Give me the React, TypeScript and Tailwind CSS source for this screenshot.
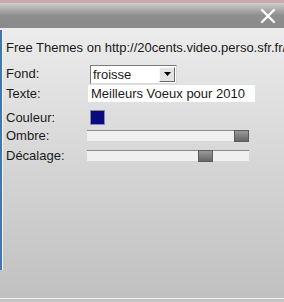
export default function App() {
  const font = { fontFamily: '"Liberation Sans", Arial, sans-serif' }
  return (
    <div className="flex h-[302px] w-[284px] flex-col overflow-hidden bg-[#c2c2c2] text-[13px] text-[#1a1a1a]" style={font}>
      <div className="h-[3px] bg-[#c8abb1]" />
      <div className="flex h-[25px] items-center justify-end bg-gradient-to-b from-[#cdcdcd] via-[#8e8e8e] to-[#8a8a8a] pr-[8px]">
        <svg width="16" height="16" viewBox="0 0 16 16">
          <path d="M2 2 L14 14 M14 2 L2 14" stroke="#fff" strokeWidth="2.4" strokeLinecap="round" />
        </svg>
      </div>
      <div className="flex flex-1 bg-gradient-to-b from-[#ececec] to-[#c0c0c0]">
        <div className="mt-[2px] mb-[28px] w-[2px] shrink-0 bg-[#4475ad]" />
        <div className="mb-[28px] w-[1px] shrink-0 bg-[#f4f4f4]" />
        <div className="flex min-w-0 flex-1 flex-col overflow-hidden pt-[12px] pl-[3px]">
          <div className="h-[15px] leading-[15px] whitespace-nowrap">Free Themes on http://20cents.video.perso.sfr.fr/</div>
          <div className="mt-[9px] flex h-[20px] items-center">
            <div className="w-[84px] shrink-0">Fond:</div>
            <div className="flex h-[19px] w-[87px] items-center border border-[#7b7b7b] border-b-[#d8d8d8] border-r-[#d8d8d8] bg-white pl-[2px]">
              <span className="flex-1 leading-none">froisse</span>
              <span className="mr-[1px] flex h-[15px] w-[16px] items-center justify-center border border-[#f8f8f8] border-b-[#6a6a6a] border-r-[#6a6a6a] bg-[#e4e4e4]">
                <svg width="7" height="4" viewBox="0 0 7 4"><path d="M0 0 H7 L3.5 4 Z" fill="#000" /></svg>
              </span>
            </div>
          </div>
          <div className="mt-[1px] flex h-[17px] items-center">
            <div className="w-[82px] shrink-0">Texte:</div>
            <div className="flex h-[17px] w-[167px] items-center bg-white pl-[3px]">Meilleurs Voeux pour 2010</div>
          </div>
          <div className="mt-[6px] flex h-[19px] items-center">
            <div className="w-[84px] shrink-0">Couleur:</div>
            <div className="h-[15px] w-[15px] border border-[#8a8aa8] bg-[#0a0a80]" />
          </div>
          <div className="mt-[2px] flex h-[13px] items-center">
            <div className="w-[81px] shrink-0">Ombre:</div>
            <div className="relative h-[11px] w-[162px] border-t border-[#8c8c8c] bg-[#f0f0f0]">
              <div className="absolute top-[-1px] right-0 h-[12px] w-[15px] border border-[#5c5c5c] bg-gradient-to-b from-[#9a9a9a] to-[#666]" />
            </div>
          </div>
          <div className="mt-[7px] flex h-[13px] items-center">
            <div className="w-[81px] shrink-0">Décalage:</div>
            <div className="relative h-[11px] w-[162px] border-t border-[#8c8c8c] bg-[#f0f0f0]">
              <div className="absolute top-[-1px] left-[111px] h-[12px] w-[15px] border border-[#5c5c5c] bg-gradient-to-b from-[#9a9a9a] to-[#666]" />
            </div>
          </div>
        </div>
      </div>
      <div className="h-[1px] bg-[#f2f2f2]" />
      <div className="h-[3px] bg-[#c4c4c4]" />
    </div>
  )
}
